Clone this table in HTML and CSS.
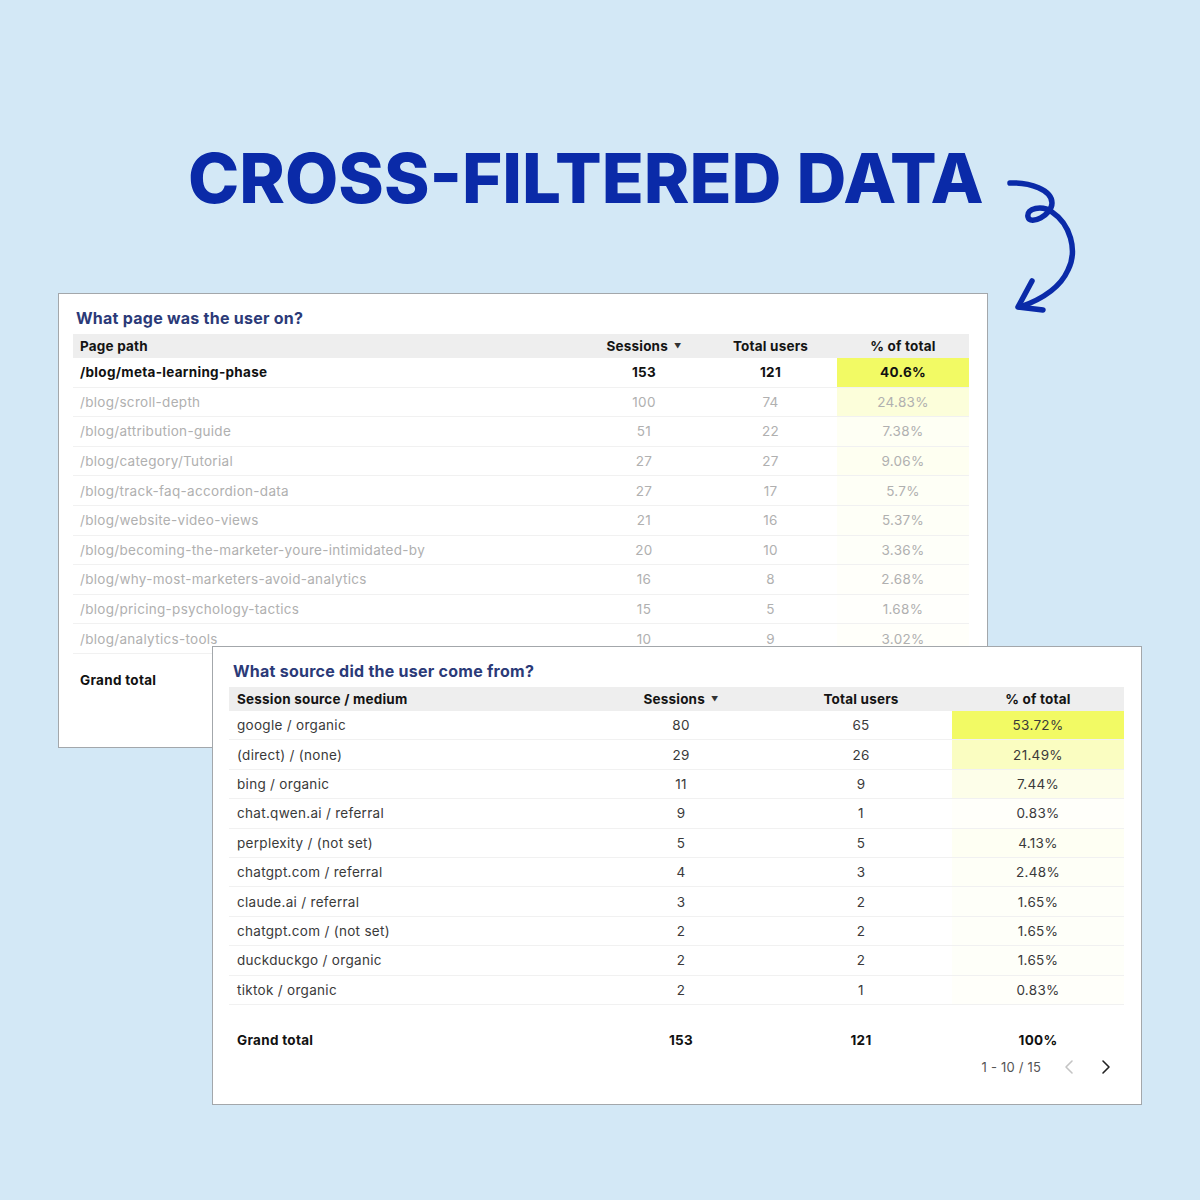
FILE: index.html
```html
<!DOCTYPE html>
<html>
<head>
<meta charset="utf-8">
<link rel="stylesheet" href="styles.css">
</head>
<body>
<div class="page">
  <h1 class="headline">CROSS-FILTERED DATA</h1>
  <svg class="curl" width="110" height="170" viewBox="0 0 110 170">
    <path d="M20 23 C40 22 62 30 62 43 C62 55 40 66 38 57 C36 48 52 45 62 52 C80 64 88 90 78 110 C70 128 50 140 30 147" />
    <path d="M42 121 L28 147 L53 150" />
  </svg>

  <section class="card card-pages">
    <h2 class="card-title">What page was the user on?</h2>
    <div class="tbl">
      <div class="row head"><span class="c1">Page path</span><span>Sessions <i class="sort">▼</i></span><span>Total users</span><span>% of total</span></div>
      <div class="row sel"><span class="c1">/blog/meta-learning-phase</span><span>153</span><span>121</span><span class="pct" style="background:rgba(242,250,100,1)">40.6%</span></div>
      <div class="row dim"><span class="c1">/blog/scroll-depth</span><span>100</span><span>74</span><span class="pct" style="background:rgba(242,250,100,0.24)">24.83%</span></div>
      <div class="row dim"><span class="c1">/blog/attribution-guide</span><span>51</span><span>22</span><span class="pct" style="background:rgba(242,250,100,0.07)">7.38%</span></div>
      <div class="row dim"><span class="c1">/blog/category/Tutorial</span><span>27</span><span>27</span><span class="pct" style="background:rgba(242,250,100,0.09)">9.06%</span></div>
      <div class="row dim"><span class="c1">/blog/track-faq-accordion-data</span><span>27</span><span>17</span><span class="pct" style="background:rgba(242,250,100,0.06)">5.7%</span></div>
      <div class="row dim"><span class="c1">/blog/website-video-views</span><span>21</span><span>16</span><span class="pct" style="background:rgba(242,250,100,0.05)">5.37%</span></div>
      <div class="row dim"><span class="c1">/blog/becoming-the-marketer-youre-intimidated-by</span><span>20</span><span>10</span><span class="pct" style="background:rgba(242,250,100,0.04)">3.36%</span></div>
      <div class="row dim"><span class="c1">/blog/why-most-marketers-avoid-analytics</span><span>16</span><span>8</span><span class="pct" style="background:rgba(242,250,100,0.03)">2.68%</span></div>
      <div class="row dim"><span class="c1">/blog/pricing-psychology-tactics</span><span>15</span><span>5</span><span class="pct" style="background:rgba(242,250,100,0.02)">1.68%</span></div>
      <div class="row dim"><span class="c1">/blog/analytics-tools</span><span>10</span><span>9</span><span class="pct" style="background:rgba(242,250,100,0.03)">3.02%</span></div>
      <div class="row total"><span class="c1">Grand total</span><span>298</span><span>217</span><span>100%</span></div>
    </div>
  </section>

  <section class="card card-sources">
    <h2 class="card-title">What source did the user come from?</h2>
    <div class="tbl">
      <div class="row head"><span class="c1">Session source / medium</span><span>Sessions <i class="sort">▼</i></span><span>Total users</span><span>% of total</span></div>
      <div class="row"><span class="c1">google / organic</span><span>80</span><span>65</span><span class="pct" style="background:rgba(242,250,100,1)">53.72%</span></div>
      <div class="row"><span class="c1">(direct) / (none)</span><span>29</span><span>26</span><span class="pct" style="background:rgba(242,250,100,0.4)">21.49%</span></div>
      <div class="row"><span class="c1">bing / organic</span><span>11</span><span>9</span><span class="pct" style="background:rgba(242,250,100,0.14)">7.44%</span></div>
      <div class="row"><span class="c1">chat.qwen.ai / referral</span><span>9</span><span>1</span><span class="pct" style="background:rgba(242,250,100,0.03)">0.83%</span></div>
      <div class="row"><span class="c1">perplexity / (not set)</span><span>5</span><span>5</span><span class="pct" style="background:rgba(242,250,100,0.08)">4.13%</span></div>
      <div class="row"><span class="c1">chatgpt.com / referral</span><span>4</span><span>3</span><span class="pct" style="background:rgba(242,250,100,0.05)">2.48%</span></div>
      <div class="row"><span class="c1">claude.ai / referral</span><span>3</span><span>2</span><span class="pct" style="background:rgba(242,250,100,0.04)">1.65%</span></div>
      <div class="row"><span class="c1">chatgpt.com / (not set)</span><span>2</span><span>2</span><span class="pct" style="background:rgba(242,250,100,0.04)">1.65%</span></div>
      <div class="row"><span class="c1">duckduckgo / organic</span><span>2</span><span>2</span><span class="pct" style="background:rgba(242,250,100,0.04)">1.65%</span></div>
      <div class="row"><span class="c1">tiktok / organic</span><span>2</span><span>1</span><span class="pct" style="background:rgba(242,250,100,0.03)">0.83%</span></div>
      <div class="row total"><span class="c1">Grand total</span><span>153</span><span>121</span><span>100%</span></div>
    </div>
    <div class="pager">
      <span class="range">1 - 10 / 15</span>
      <svg class="chev prev" width="12" height="16" viewBox="0 0 12 16"><path d="M9 2 L3 8 L9 14"/></svg>
      <svg class="chev next" width="12" height="16" viewBox="0 0 12 16"><path d="M3 2 L9 8 L3 14"/></svg>
    </div>
  </section>
</div>
</body>
</html>
```

FILE: styles.css
```css
html, body {
  margin: 0;
  padding: 0;
}
body {
  background: #d3e8f6;
  font-family: "Inter", "Open Sans", sans-serif;
}
.page {
  position: relative;
  width: 1200px;
  height: 1200px;
  padding-top: 140px;
  box-sizing: border-box;
}
.headline {
  margin: 0 0 0 188px;
  font-size: 69px;
  line-height: 76px;
  font-weight: 800;
  color: #0a2aa8;
  letter-spacing: 0;
  white-space: nowrap;
}
.curl {
  position: absolute;
  left: 990px;
  top: 160px;
}
.curl path {
  fill: none;
  stroke: #0a2aa8;
  stroke-width: 5.5;
  stroke-linecap: round;
  stroke-linejoin: round;
}
.card {
  background: #fff;
  border: 1px solid #a3a7ab;
  box-sizing: border-box;
  width: 930px;
}
.card-pages {
  margin: 77px 0 0 58px;
  height: 455px;
  padding: 14px 18px 0 14px;
}
.card-sources {
  position: absolute;
  left: 212px;
  top: 646px;
  height: 459px;
  padding: 14px 17px 0 16px;
}
.card-title {
  margin: 0 0 6px 3px;
  font-size: 16px;
  line-height: 20px;
  font-weight: 700;
  letter-spacing: 0.25px;
  color: #2b3a78;
}
.card-sources .card-title {
  margin-left: 4px;
}
.row {
  display: grid;
  align-items: stretch;
  height: 29.6px;
  box-sizing: border-box;
  border-bottom: 1px solid #f1f1f1;
  font-size: 13.5px;
  letter-spacing: 0.3px;
  color: #3a3a3a;
}
.card-pages .row {
  grid-template-columns: 511px 120px 133px 132px;
}
.card-sources .row {
  grid-template-columns: 363px 178px 182px 172px;
  height: 29.4px;
}
.row span {
  display: flex;
  align-items: center;
  justify-content: center;
  white-space: nowrap;
}
.row span.c1 {
  justify-content: flex-start;
  padding-left: 7px;
}
.card-sources .row span.c1 {
  padding-left: 8px;
}
.row.head {
  height: 24px;
  background: #eeeeee;
  border-bottom: none;
  font-weight: 700;
  letter-spacing: 0.2px;
  color: #141414;
}
.sort {
  font-style: normal;
  font-size: 7px;
  margin-left: 6px;
  color: #333;
}
.row.sel {
  font-weight: 700;
  color: #111;
}
.row.dim {
  color: #b0b0b0;
}
.row.total {
  border-bottom: none;
  font-weight: 700;
  color: #111;
  height: 30px;
}
.card-pages .row.total {
  margin-top: 11px;
}
.card-sources .row.total {
  margin-top: 20px;
}
.pager {
  display: flex;
  justify-content: flex-end;
  align-items: center;
  height: 24px;
  padding-right: 12px;
  font-size: 13px;
  letter-spacing: 0.2px;
  color: #555;
}
.range {
  margin-right: 22px;
}
.chev path {
  fill: none;
  stroke-width: 1.6;
  stroke-linecap: round;
  stroke-linejoin: round;
}
.chev.prev {
  margin-right: 25px;
}
.chev.prev path {
  stroke: #c4c4c4;
}
.chev.next path {
  stroke: #222;
}
```
